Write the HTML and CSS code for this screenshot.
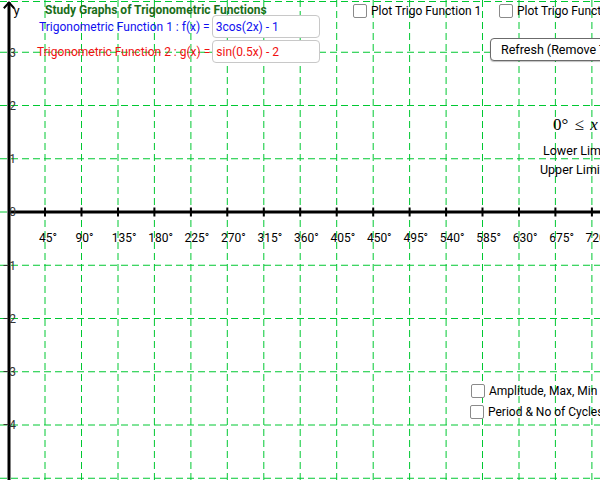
FILE: index.html
```html
<!DOCTYPE html>
<html>
<head>
<meta charset="utf-8">
<link rel="stylesheet" href="styles.css">
</head>
<body>
<div class="stage">
  <svg class="graph" width="600" height="480" viewBox="0 0 600 480" xmlns="http://www.w3.org/2000/svg">
    <g class="grid" stroke="#00c832" stroke-width="1" stroke-dasharray="7 4" fill="none">
      <line x1="0" y1="1.5" x2="600" y2="1.5"/>
      <line x1="0" y1="52.25" x2="600" y2="52.25"/>
      <line x1="0" y1="105.5" x2="600" y2="105.5"/>
      <line x1="0" y1="158.75" x2="600" y2="158.75"/>
      <line x1="0" y1="212" x2="600" y2="212"/>
      <line x1="0" y1="265.25" x2="600" y2="265.25"/>
      <line x1="0" y1="318.5" x2="600" y2="318.5"/>
      <line x1="0" y1="371.75" x2="600" y2="371.75"/>
      <line x1="0" y1="425" x2="600" y2="425"/>
      <line x1="0" y1="478.25" x2="600" y2="478.25"/>
      <line x1="45" y1="0" x2="45" y2="480"/>
      <line x1="81.5" y1="0" x2="81.5" y2="480"/>
      <line x1="118" y1="0" x2="118" y2="480"/>
      <line x1="154.4" y1="0" x2="154.4" y2="480"/>
      <line x1="190.9" y1="0" x2="190.9" y2="480"/>
      <line x1="227.3" y1="0" x2="227.3" y2="480"/>
      <line x1="263.8" y1="0" x2="263.8" y2="480"/>
      <line x1="300.2" y1="0" x2="300.2" y2="480"/>
      <line x1="336.7" y1="0" x2="336.7" y2="480"/>
      <line x1="373.2" y1="0" x2="373.2" y2="480"/>
      <line x1="409.6" y1="0" x2="409.6" y2="480"/>
      <line x1="446.1" y1="0" x2="446.1" y2="480"/>
      <line x1="482.5" y1="0" x2="482.5" y2="480"/>
      <line x1="519" y1="0" x2="519" y2="480"/>
      <line x1="555.4" y1="0" x2="555.4" y2="480"/>
      <line x1="591.9" y1="0" x2="591.9" y2="480"/>
    </g>
    <g class="axes" stroke="#000" fill="none">
      <line x1="9" y1="212" x2="600" y2="212" stroke-width="3"/>
      <line x1="9" y1="2" x2="9" y2="480" stroke-width="3"/>
      <polyline points="4.5,7.5 9,2.5 13.5,7.5" stroke-width="2" stroke-linecap="square"/>
      <g stroke-width="2">
        <line x1="45" y1="207.5" x2="45" y2="216.5"/>
        <line x1="81.5" y1="207.5" x2="81.5" y2="216.5"/>
        <line x1="118" y1="207.5" x2="118" y2="216.5"/>
        <line x1="154.4" y1="207.5" x2="154.4" y2="216.5"/>
        <line x1="190.9" y1="207.5" x2="190.9" y2="216.5"/>
        <line x1="227.3" y1="207.5" x2="227.3" y2="216.5"/>
        <line x1="263.8" y1="207.5" x2="263.8" y2="216.5"/>
        <line x1="300.2" y1="207.5" x2="300.2" y2="216.5"/>
        <line x1="336.7" y1="207.5" x2="336.7" y2="216.5"/>
        <line x1="373.2" y1="207.5" x2="373.2" y2="216.5"/>
        <line x1="409.6" y1="207.5" x2="409.6" y2="216.5"/>
        <line x1="446.1" y1="207.5" x2="446.1" y2="216.5"/>
        <line x1="482.5" y1="207.5" x2="482.5" y2="216.5"/>
        <line x1="519" y1="207.5" x2="519" y2="216.5"/>
        <line x1="555.4" y1="207.5" x2="555.4" y2="216.5"/>
        <line x1="591.9" y1="207.5" x2="591.9" y2="216.5"/>
      </g>
    </g>
    <g class="xlab">
      <text x="39" y="242">45°</text>
      <text x="75.5" y="242">90°</text>
      <text x="111.7" y="242">135°</text>
      <text x="148.2" y="242">180°</text>
      <text x="184.6" y="242">225°</text>
      <text x="221.1" y="242">270°</text>
      <text x="257.5" y="242">315°</text>
      <text x="294" y="242">360°</text>
      <text x="330.5" y="242">405°</text>
      <text x="366.9" y="242">450°</text>
      <text x="403.4" y="242">495°</text>
      <text x="439.8" y="242">540°</text>
      <text x="476.3" y="242">585°</text>
      <text x="512.7" y="242">630°</text>
      <text x="549.2" y="242">675°</text>
      <text x="585.6" y="242">720°</text>
    </g>
    <g class="ylab">
      <text x="16" y="56.5">3</text>
      <text x="16" y="109.8">2</text>
      <text x="16" y="163">1</text>
      <text x="16" y="216.3">0</text>
      <text x="16" y="269.5">−1</text>
      <text x="16" y="322.8">−2</text>
      <text x="16" y="376">−3</text>
      <text x="16" y="429.3">−4</text>
    </g>
    <text class="ylab-name" x="13.5" y="15">y</text>
  </svg>

  <div class="title">Study Graphs of Trigonometric Functions</div>

  <div class="fn fn1">
    <span class="fn-label">Trigonometric Function 1 : f(x) = </span>
    <span class="fn-input">3cos(2x) - 1</span>
  </div>
  <div class="fn fn2">
    <span class="fn-label">Trigonometric Function 2 : g(x) = </span>
    <span class="fn-input">sin(0.5x) - 2</span>
  </div>

  <div class="check check-plot1"><span class="cb"></span><span class="cb-text">Plot Trigo Function 1</span></div>
  <div class="check check-plot2"><span class="cb"></span><span class="cb-text">Plot Trigo Function 2</span></div>

  <div class="refresh">Refresh (Remove Trace)</div>

  <div class="range">0° <span class="rel">≤</span> <i>x</i> ≤ 720°</div>
  <div class="limit lower">Lower Limit</div>
  <div class="limit upper">Upper Limit</div>

  <div class="check check-amp"><span class="cb"></span><span class="cb-text">Amplitude, Max, Min</span></div>
  <div class="check check-period"><span class="cb"></span><span class="cb-text">Period &amp; No of Cycles</span></div>
</div>
</body>
</html>
```

FILE: styles.css
```css
html, body {
  margin: 0;
  padding: 0;
  background: #fff;
}

.stage {
  position: relative;
  width: 600px;
  height: 480px;
  overflow: hidden;
  font-family: Roboto, "Liberation Sans", sans-serif;
  font-size: 12px;
  color: #000;
  white-space: nowrap;
}

.graph {
  position: absolute;
  left: 0;
  top: 0;
  display: block;
}

.xlab text {
  font-family: Roboto, "Liberation Sans", sans-serif;
  font-size: 12px;
  fill: #000;
}

.ylab text {
  font-family: Roboto, "Liberation Sans", sans-serif;
  font-size: 12px;
  fill: #333;
  text-anchor: end;
}

.ylab-name {
  font-family: Roboto, "Liberation Sans", sans-serif;
  font-size: 13px;
  fill: #000;
}

.title {
  position: absolute;
  left: 45px;
  top: 3px;
  font-weight: bold;
  color: #1a6e1a;
  font-size: 12px;
  line-height: 14px;
}

.fn {
  position: absolute;
  display: flex;
  align-items: center;
  height: 23px;
}

.fn1 { left: 39px; top: 15px; color: #1010f0; }
.fn2 { left: 37px; top: 40px; color: #f01010; }

.fn-label {
  font-size: 12px;
  line-height: 14px;
}

.fn-input {
  box-sizing: border-box;
  width: 108px;
  height: 23px;
  margin-left: 2px;
  padding: 0 3px;
  border: 1px solid #c8c8c8;
  border-radius: 4px;
  background: #fff;
  display: flex;
  align-items: center;
  font-size: 12px;
}

.check {
  position: absolute;
  display: flex;
  align-items: center;
  gap: 4px;
  font-size: 12px;
  line-height: 14px;
}

.cb {
  box-sizing: border-box;
  display: block;
  width: 14px;
  height: 14px;
  border: 1.5px solid #8a8a8a;
  border-radius: 2px;
  background: #fff;
}

.check-plot1 { left: 353px; top: 4px; }
.check-plot2 { left: 499px; top: 4px; }
.check-amp { left: 471px; top: 384px; }
.check-period { left: 470px; top: 405px; }

.refresh {
  position: absolute;
  left: 490px;
  top: 38px;
  box-sizing: border-box;
  height: 23px;
  padding: 0 10px;
  border: 1.5px solid #6b6b6b;
  border-radius: 4px;
  background: #fff;
  display: flex;
  align-items: center;
  font-size: 12.5px;
  box-shadow: 0 1px 1px rgba(0,0,0,0.25);
}

.range {
  position: absolute;
  left: 553px;
  top: 115px;
  font-family: "Liberation Serif", "DejaVu Serif", serif;
  font-size: 17px;
  line-height: 20px;
  word-spacing: 2px;
}

.limit {
  position: absolute;
  font-size: 12.5px;
  line-height: 14px;
}

.lower { left: 543px; top: 144px; }
.upper { left: 540px; top: 163px; }
```
